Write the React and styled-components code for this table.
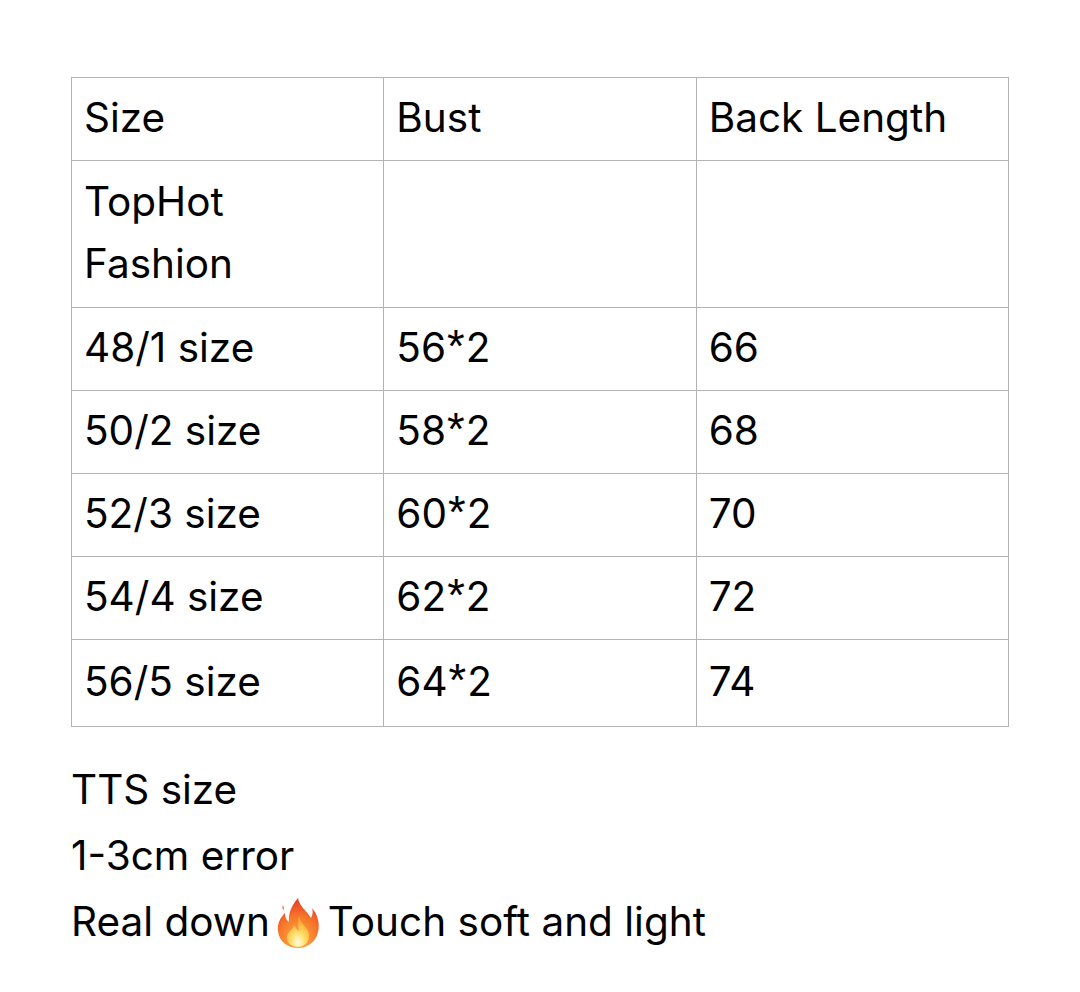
import React from 'react'
import styled, { createGlobalStyle } from 'styled-components'

const GlobalStyle = createGlobalStyle`
    html, body {
        margin: 0;
        padding: 0;
        background: #ffffff;
    }
    body {
        font-family: Inter, "Noto Sans", "Liberation Sans", sans-serif;
        color: #000000;
    }
`

const rows = [
    ['Size', 'Bust', 'Back Length'],
    ['TopHot Fashion', '', ''],
    ['48/1 size', '56*2', '66'],
    ['50/2 size', '58*2', '68'],
    ['52/3 size', '60*2', '70'],
    ['54/4 size', '62*2', '72'],
    ['56/5 size', '64*2', '74'],
]

// the asterisk in the shot sits high, like SF; Inter centres it
const withStar = (text) => {
    const parts = text.split('*')
    if (parts.length === 1) return text
    return (
        <>
            {parts[0]}
            <S.Star>*</S.Star>
            {parts[1]}
        </>
    )
}

const Fire = () => (
    <S.Emoji viewBox="0 0 44 52" aria-hidden="true">
        <defs>
            <radialGradient id="fOuter" cx="0.5" cy="0.85" r="0.8">
                <stop offset="0" stopColor="#ffb347" />
                <stop offset="0.6" stopColor="#f7782a" />
                <stop offset="1" stopColor="#e8402a" />
            </radialGradient>
            <radialGradient id="fInner" cx="0.5" cy="0.85" r="0.7">
                <stop offset="0" stopColor="#fffbe0" />
                <stop offset="0.45" stopColor="#ffe06a" />
                <stop offset="1" stopColor="#ffa82e" />
            </radialGradient>
        </defs>
        <path
            d="M22 1 C23 9 31 14 35 21 C37 17 37 14 36 11 C42 18 44 27 42 35 C40 45 31 51 22 51 C11 51 3 44 2 34 C1 26 5 20 9 16 C9 20 10 23 13 25 C12 16 16 8 22 1 Z"
            fill="url(#fOuter)"
        />
        <path d="M7 8 C6 10 6 12 8 13 C8 11 8 10 7 8 Z" fill="#f7782a" />
        <path
            d="M23 19 C24 27 32 30 33 37 C34 45 28 50 22 50 C15 50 10 45 11 39 C12 34 17 33 18 28 C20 31 21 33 23 34 C22 29 22 24 23 19 Z"
            fill="url(#fInner)"
        />
    </S.Emoji>
)

const App = () => {
    return (
        <>
            <GlobalStyle />
            <S.Page>
                <S.Table>
                    <tbody>
                        {rows.map((row, i) => (
                            <S.Row key={i} $tall={i === 1} $last={i === rows.length - 1}>
                                {row.map((cell, j) => (
                                    <S.Cell key={j}>
                                        {i === 1 && j === 0 ? (
                                            <>
                                                TopHot
                                                <br />
                                                Fashion
                                            </>
                                        ) : (
                                            withStar(cell)
                                        )}
                                    </S.Cell>
                                ))}
                            </S.Row>
                        ))}
                    </tbody>
                </S.Table>
                <S.Notes>
                    <S.Line>TTS size</S.Line>
                    <S.Line>1-3cm error</S.Line>
                    <S.Line>
                        Real down
                        <Fire />
                        Touch soft and light
                    </S.Line>
                </S.Notes>
            </S.Page>
        </>
    )
}

const S = {
    Page: styled.div`
        width: 1080px;
        height: 992px;
        box-sizing: border-box;
        padding: 77px 0 0 71px;
        overflow: hidden;
    `,
    Table: styled.table`
        width: 938px;
        border-collapse: collapse;
        table-layout: fixed;
    `,
    Row: styled.tr`
        height: ${({ $tall, $last }) => ($tall ? '147px' : $last ? '87px' : '83px')};
    `,
    Cell: styled.td`
        border: 1px solid #b3b3b3;
        padding: 0 12px 3px 12px;
        font-size: 40.5px;
        line-height: 62px;
        vertical-align: middle;
        white-space: nowrap;
    `,
    Star: styled.span`
        font-family: "Liberation Sans", sans-serif;
        font-size: 1.12em;
        line-height: 0;
        margin: 0 1px;
    `,
    Notes: styled.div`
        display: flex;
        flex-direction: column;
        padding: 30px 0 0 0;
    `,
    Line: styled.div`
        display: flex;
        align-items: center;
        font-size: 40.5px;
        line-height: 66px;
        height: 66px;
    `,
    Emoji: styled.svg`
        width: 44px;
        height: 52px;
        margin: 2px 8px 0 6px;
        flex-shrink: 0;
    `,
}

export default App
